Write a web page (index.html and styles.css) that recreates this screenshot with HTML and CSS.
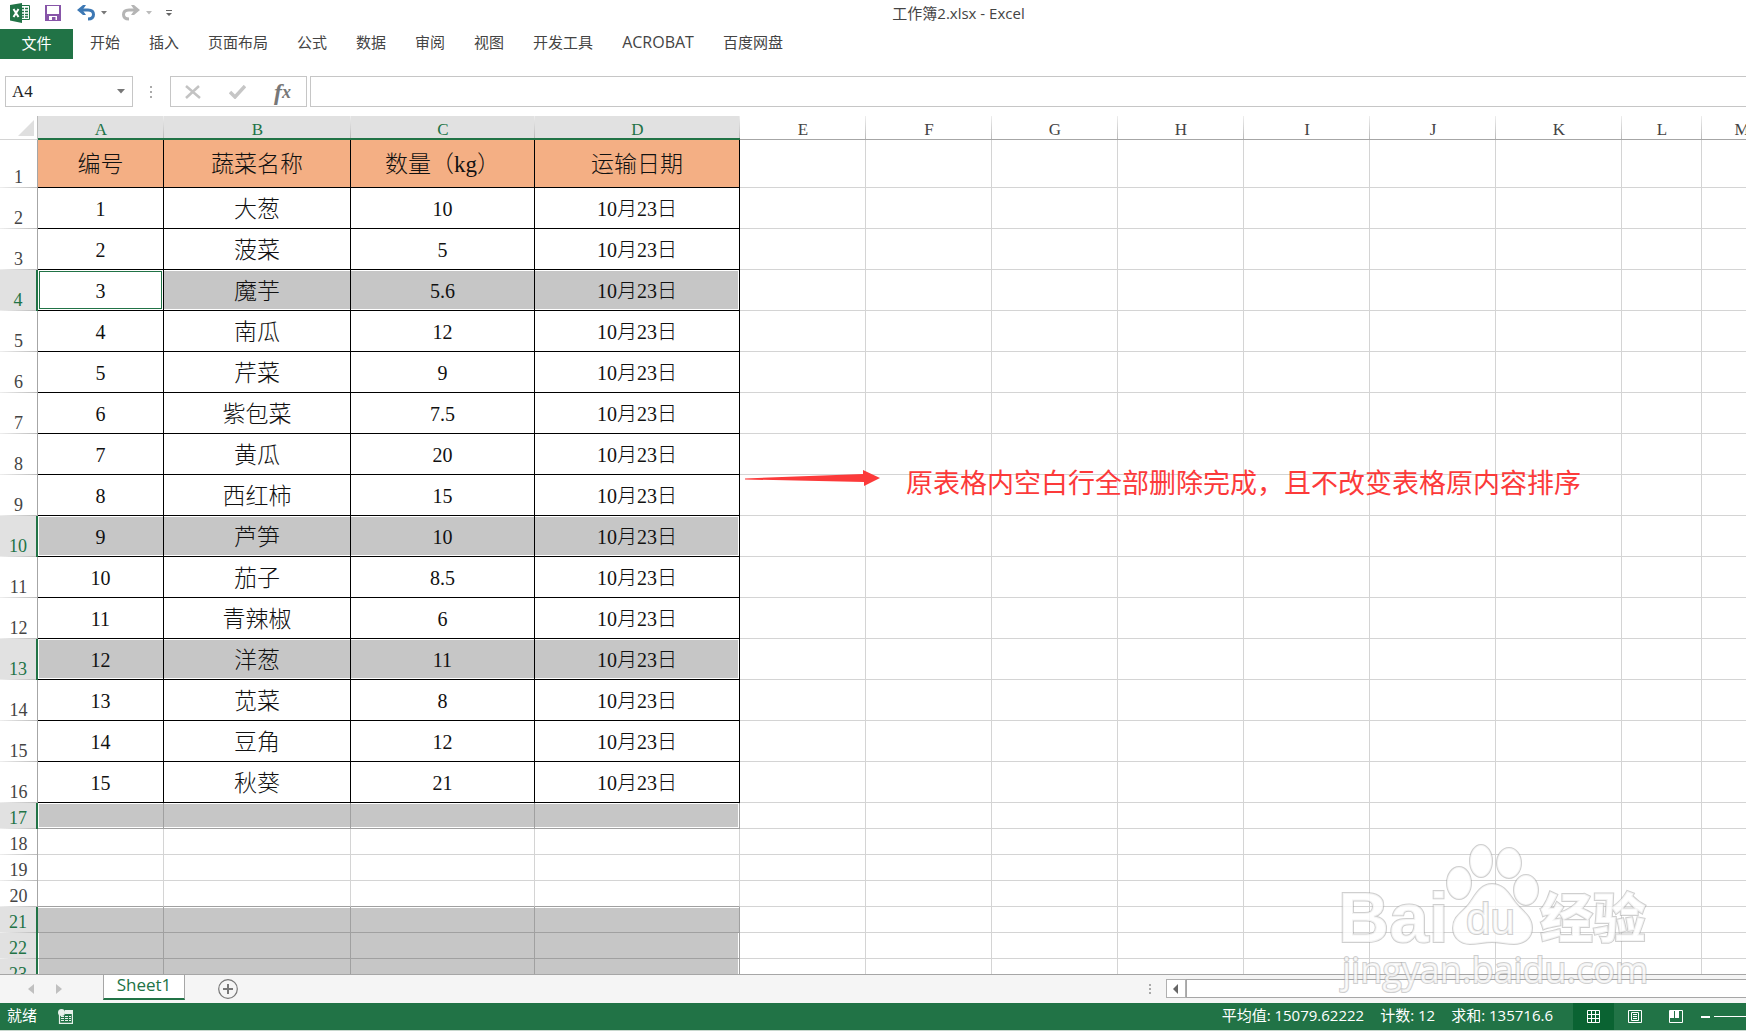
FILE: index.html
```html
<!DOCTYPE html>
<html lang="zh-CN">
<head>
<meta charset="utf-8">
<title>工作簿2.xlsx - Excel</title>
<link rel="stylesheet" href="styles.css">
</head>
<body>
<div class="app">
  <header class="titlebar">
    <div class="quick">
      <svg class="logo" width="20" height="20" viewBox="0 0 20 20"><path fill="#fff" stroke="#217346" d="M10 2.500h9.500v14H10z"/><path stroke="#217346" stroke-width="1.500" d="M11 5.500h3M15 5.500h3M11 8.500h3M15 8.500h3M11 11.500h3M15 11.500h3M11 14h3M15 14h3"/><path fill="#217346" d="M0 2 12 0v20L0 17.500z"/><path fill="none" stroke="#fff" stroke-width="2" d="m3.500 6 5 8M8.500 6l-5 8"/></svg>
      <button class="tool save" aria-label="保存"><svg width="16" height="16" viewBox="0 0 16 16"><path fill="#8755a8" d="M0 0h16v16H0z"/><path fill="#fff" d="M2 1h12v8H2zM4 11h8v4h-1.500v-3H7v3H4z"/></svg></button>
      <button class="tool undo" aria-label="撤消"><svg width="18" height="16" viewBox="0 0 18 16"><path fill="none" stroke="#3d78b4" stroke-width="3" d="M3 5h8q5.500 0 5.500 4.500T11 14"/><path fill="#3d78b4" d="M0 5 6 0h3L5.500 5 9 10H6z"/></svg></button>
      <button class="tool drop" aria-label="撤消列表"><svg width="6" height="4" viewBox="0 0 6 4"><path fill="#777" d="M0 0h6L3 3.500z"/></svg></button>
      <button class="tool redo" aria-label="恢复"><svg width="18" height="16" viewBox="0 0 18 16"><path fill="none" stroke="#b5b5b5" stroke-width="3" d="M15 5H7Q1.500 5 1.500 9.500T7 14"/><path fill="#b5b5b5" d="m18 5-6-5H9l3.500 5L9 10h3z"/></svg></button>
      <button class="tool drop" aria-label="恢复列表"><svg width="6" height="4" viewBox="0 0 6 4"><path fill="#bbb" d="M0 0h6L3 3.500z"/></svg></button>
      <button class="tool more" aria-label="自定义"><svg width="6" height="6" viewBox="0 0 6 6"><path fill="#666" d="M0 0h6v1H0zM0 3h6L3 6z"/></svg></button>
    </div>
    <h1 class="title">工作簿2.xlsx - Excel</h1>
  </header>
  <nav class="ribbon">
    <button class="tab file">文件</button>
    <button class="tab">开始</button><button class="tab">插入</button><button class="tab">页面布局</button><button class="tab">公式</button><button class="tab">数据</button><button class="tab">审阅</button><button class="tab">视图</button><button class="tab">开发工具</button><button class="tab latin">ACROBAT</button><button class="tab">百度网盘</button>
  </nav>
  <div class="formula">
    <div class="namebox"><input class="name" aria-label="名称框" value="A4"><button class="tool" aria-label="名称列表"><svg width="8" height="5" viewBox="0 0 8 5"><path fill="#777" d="M0 0h8L4 4.500z"/></svg></button></div>
    <svg class="grip" width="2" height="12" viewBox="0 0 2 12"><path fill="#aaa" d="M0 0h2v2H0zM0 5h2v2H0zM0 10h2v2H0z"/></svg>
    <div class="fx">
      <button class="tool" aria-label="取消"><svg width="16" height="14" viewBox="0 0 16 14"><path fill="none" stroke="#c3c3c3" stroke-width="2.500" d="m1 1 14 12M14 1 1 13"/></svg></button>
      <button class="tool" aria-label="输入"><svg width="17" height="14" viewBox="0 0 17 14"><path fill="none" stroke="#c6c6c6" stroke-width="3.500" d="m1 7 5 5L16 1"/></svg></button>
      <button class="tool insert" aria-label="插入函数"><i>f</i><i class="sub">x</i></button>
    </div>
    <input class="entry" aria-label="编辑栏">
  </div>
  <main class="sheet">
    <table class="grid">
      <colgroup><col class="w-head"><col class="w-a"><col class="w-b"><col class="w-c"><col class="w-d"><col class="w-e" span="7"><col class="w-l" span="2"></colgroup>
      <thead><tr><th class="corner"><svg width="16" height="16" viewBox="0 0 16 16"><path fill="#dfdfdf" d="M16 0v16H0z"/></svg></th><th class="on">A</th><th class="on">B</th><th class="on">C</th><th class="on">D</th><th>E</th><th>F</th><th>G</th><th>H</th><th>I</th><th>J</th><th>K</th><th>L</th><th>M</th></tr></thead>
      <tbody id="rows"></tbody>
    </table>
    <svg class="arrow" width="136" height="18" viewBox="0 0 136 18"><path fill="#fc3a3a" d="M0 8.500 118 4V0l17 8-16 8v-4L0 9.500z"/></svg>
    <p class="note">原表格内空白行全部删除完成，且不改变表格原内容排序</p>
  </main>
  <div class="sheetbar">
    <button class="tool prev" aria-label="上一个"><svg width="6" height="10" viewBox="0 0 6 10"><path fill="#c0c0c0" d="M6 0v10L0 5z"/></svg></button>
    <button class="tool next" aria-label="下一个"><svg width="6" height="10" viewBox="0 0 6 10"><path fill="#c0c0c0" d="M0 0v10l6-5z"/></svg></button>
    <button class="sheet-tab">Sheet1</button>
    <button class="tool add" aria-label="新工作表"><svg width="20" height="20" viewBox="0 0 20 20"><circle cx="10" cy="10" r="9.300" fill="none" stroke="#777" stroke-width="1.200"/><path stroke="#777" stroke-width="2" d="M5 10h10M10 5v10"/></svg></button>
    <div class="hscroll">
      <svg width="2" height="10" viewBox="0 0 2 10"><path fill="#aaa" d="M0 0h2v2H0zM0 4h2v2H0zM0 8h2v2H0z"/></svg>
      <button class="tool left" aria-label="向左滚动"><svg width="5" height="10" viewBox="0 0 5 10"><path fill="#666" d="M5 0v10L0 5z"/></svg></button>
      <div class="track"></div>
    </div>
  </div>
  <footer class="status">
    <span>就绪</span>
    <svg class="macro" width="15" height="15" viewBox="0 0 15 15"><path fill="none" stroke="#e6f0ea" stroke-width="1.200" d="M1.500 6v8.400h12.900V2"/><path fill="#e6f0ea" d="M7 1h8v4H7z"/><circle cx="3.500" cy="3.500" r="3.500" fill="#e6f0ea"/><path stroke="#e6f0ea" stroke-dasharray="3 1" d="M3 7.500h10M3 9.500h10M3 11.500h10"/></svg>
    <div class="sums"><span>平均值: 15079.62222</span><span>计数: 12</span><span>求和: 135716.6</span></div>
    <button class="view active" aria-label="普通"><svg width="13" height="13" viewBox="0 0 13 13"><path fill="none" stroke="#fff" d="M.5.5h12v12H.5zM4.500 0v13M8.500 0v13M0 4.500h13M0 8.500h13"/></svg></button>
    <button class="view" aria-label="页面布局"><svg width="14" height="13" viewBox="0 0 14 13"><path fill="none" stroke="#fff" d="M.5.5h13v12H.5zM3.500 2.500h7v8h-7zM5 4.500h4M5 6.500h4M5 8.500h4"/></svg></button>
    <button class="view" aria-label="分页预览"><svg width="14" height="13" viewBox="0 0 14 13"><path fill="none" stroke="#fff" d="M.5.5h13v12H.5z"/><path fill="#fff" d="M1 1h4v7H1zM6 1h4v7H6z"/></svg></button>
    <div class="zoom"><span class="minus"></span><span class="rail"></span></div>
  </footer>
  <svg class="watermark" width="330" height="160" viewBox="0 0 330 160">
    <g class="ink">
      <text class="wm-bai" x="8" y="102">Bai</text>
      <ellipse cx="129" cy="43" rx="12" ry="16"/><ellipse cx="151" cy="21" rx="11" ry="16"/><ellipse cx="179" cy="23" rx="12" ry="15"/><ellipse cx="196" cy="50" rx="12" ry="15"/>
      <path d="M162 44c12 0 17 10 23 18s17 14 17 26c0 10-8 16-18 16-8 0-14-2-22-2s-14 2-22 2c-10 0-17-7-17-16 0-12 10-16 16-24s11-20 23-20z"/>
      <text class="wm-du" x="136" y="94">du</text>
      <text class="wm-cn" x="210" y="98">经验</text>
      <text class="wm-url" x="12" y="143">jingyan.baidu.com</text>
    </g>
  </svg>
</div>
<script src="grid.js"></script>
</body>
</html>
```
FILE: styles.css
```css
* { box-sizing: border-box; }
body { margin: 0; background: #fff; color: #444; font: 15px/20px "Open Sans", "Noto Sans CJK SC", sans-serif; }
button, input { font: inherit; color: inherit; border: 0; background: none; padding: 0; margin: 0; outline: 0; }
svg { display: block; flex: none; }
.app { display: flex; flex-direction: column; height: 100vh; overflow: hidden; position: relative; }
.tool { display: flex; align-items: center; justify-content: center; }

.titlebar { display: grid; grid-template-columns: 1fr auto 1fr; height: 29px; padding-right: 10px; flex: none; align-items: start; }
.quick { display: flex; align-items: center; padding-left: 10px; height: 26px; }
.save { margin-left: 15px; }
.undo { margin-left: 16px; }
.drop { margin-left: 6px; }
.redo { margin-left: 15px; }
.more { margin-left: 14px; }
.title { grid-column: 2; margin: 0; padding-left: 181px; font-size: 15px; font-weight: 400; line-height: 26px; }

.ribbon { display: flex; height: 47px; flex: none; align-items: flex-start; gap: 29px; }
.tab { height: 26px; white-space: nowrap; }
.latin { font-size: 16px; }
.file { width: 73px; height: 30px; margin-right: -12px; padding-bottom: 2px; background: #217346; color: #fff; }

.formula { display: flex; height: 31px; flex: none; padding-left: 5px; align-items: stretch; }
.namebox { display: flex; width: 128px; border: 1px solid #c6c6c6; padding: 0 7px 0 6px; font: 17px/20px "Liberation Serif", serif; color: #222; }
.name { flex: 1; min-width: 0; }
.grip { align-self: center; margin: 0 18px 0 17px; }
.fx { display: flex; width: 137px; border: 1px solid #c6c6c6; align-items: center; justify-content: space-between; padding: 0 15px 0 14px; margin-right: 3px; }
.insert { font: italic 700 24px/24px "Liberation Serif", serif; color: #777; }
.sub { font-size: 18px; align-self: flex-end; }
.entry { flex: 1; border: 1px solid #c6c6c6; border-right: 0; }

.sheet { flex: 1; min-height: 0; overflow: hidden; position: relative; padding-top: 9px; border-bottom: 1px solid #a6a6a6; }
.grid { table-layout: fixed; width: 0; border-collapse: separate; border-spacing: 0; font-family: "Liberation Serif", "Noto Sans CJK SC", serif; }
.w-head { width: 38px; } .w-a { width: 126px; } .w-b { width: 187px; } .w-c { width: 184px; } .w-d { width: 205px; } .w-e { width: 126px; } .w-l { width: 80px; }
.grid th { font-weight: 400; padding: 0; }
thead th { height: 24px; font-size: 17px; line-height: 19px; vertical-align: bottom; border-bottom: 1px solid #a6a6a6; background: linear-gradient(#eee, #bbb) right / 1px 100% no-repeat; }
thead th.on { border-bottom: 2px solid #217346; color: #217346; background-color: #e1e1e1; line-height: 17px; }
thead th.corner { border-bottom-color: #d4d4d4; background: none; border-right: 1px solid #bbb; padding: 0 3px 3px 18px; }
tbody th { height: 26px; vertical-align: bottom; font-size: 18px; line-height: 22px; border-right: 1px solid #a6a6a6; background: linear-gradient(90deg, #eee, #bbb) bottom / 100% 1px no-repeat; }
tbody th.on { color: #217346; background-color: #e1e1e1; border-right: 2px solid #217346; }
td { border-right: 1px solid #d4d4d4; border-bottom: 1px solid #d4d4d4; padding: 0; text-align: center; vertical-align: middle; color: #111; font-size: 20px; line-height: 24px; white-space: nowrap; }
.data > * { height: 41px; }
.head > * { height: 48px; }
.data .box, .head .box { border-color: #000; padding-top: 2px; }
.head .box { background: #f4af84; font-size: 23px; }
.data .veg { font-size: 23px; font-weight: 300; padding-top: 4px; }
.head .box, .data .date { font-weight: 300; }
.sel { background: #c6c6c6; border-color: #a0a0a0; box-shadow: inset 0 1px #fff, inset 0 -1px #fff; }
.sel.first { box-shadow: inset 1px 1px #fff, inset 0 -1px #fff; }
.sel.last { box-shadow: inset 0 1px #fff, inset -1px -1px #fff; }
.run .sel { box-shadow: none; }
.run .sel.first { box-shadow: inset 1px 0 #fff; }
.run .sel.last { box-shadow: inset -1px 0 #fff; }
.edge .box { border-bottom-color: #a0a0a0; box-shadow: none; }
.top .sel, .top .sel.first, .top .sel.last { box-shadow: inset 0 1px #fff; }
.sel.current { background: #fff; box-shadow: inset 0 0 0 1px #fff, inset 0 0 0 2px #217346; }

.arrow { position: absolute; left: 745px; top: 363px; }
.note { position: absolute; left: 906px; top: 355px; margin: 0; color: #fc3a3a; font: 27px/40px "Noto Sans CJK SC", sans-serif; white-space: nowrap; }

.sheetbar { display: flex; height: 28px; flex: none; background: #f5f5f5; align-items: flex-start; }
.prev, .next { height: 28px; }
.prev { margin-left: 28px; }
.next { margin: 0 41px 0 22px; }
.sheet-tab { width: 82px; height: 25px; padding-bottom: 4px; border: 1px solid #a6a6a6; border-top: 0; border-bottom: 2px solid #217346; background: #fff; color: #217346; font-size: 17px; line-height: 18px; }
.add { margin: 4px 0 0 33px; }
.hscroll { display: flex; flex: none; width: 34.2%; margin-left: auto; align-items: center; padding-top: 4px; }
.left { width: 20px; height: 19px; margin-left: 15px; border: 1px solid #b0b0b0; background: #fff; }
.track { flex: 1; height: 19px; border: 1px solid #a6a6a6; border-right: 0; background: #fff; }

.status { display: flex; height: 28px; flex: none; padding-left: 7px; background: #217346; border-bottom: 1px solid #c8d8ce; color: #fff; font-size: 15px; line-height: 25px; align-items: stretch; white-space: nowrap; }
.macro { margin: 6px 0 0 21px; }
.sums { display: flex; gap: 16px; margin: 0 20px 0 auto; }
.view { width: 41px; display: flex; align-items: center; justify-content: center; }
.active { background: #0a6332; }
.zoom { display: flex; align-items: center; width: 50px; gap: 4px; padding-left: 5px; }
.minus { width: 9px; height: 2px; background: #fff; }
.rail { flex: 1; height: 1px; background: #fff; }

.watermark { position: absolute; right: 86px; bottom: 31px; pointer-events: none; }
.ink { fill: rgba(255, 255, 255, .75); stroke: rgba(160, 160, 160, .5); stroke-width: 2; paint-order: stroke; }
.wm-bai { font: 700 71px "Liberation Sans", sans-serif; }
.wm-du { font: 400 44px "Liberation Sans", sans-serif; }
.wm-cn { font: 900 53px "Noto Sans CJK SC", sans-serif; }
.wm-url { font: 36px "Open Sans", sans-serif; }
```
FILE: grid.js
```js
const names = ["大葱", "菠菜", "魔芋", "南瓜", "芹菜", "紫包菜", "黄瓜", "西红柿", "芦笋", "茄子", "青辣椒", "洋葱", "苋菜", "豆角", "秋葵"];
const amounts = ["10", "5", "5.6", "12", "9", "7.5", "20", "15", "10", "8.5", "6", "11", "8", "12", "21"];
const heads = ["编号", "蔬菜名称", "数量（kg）", "运输日期"];
const selected = [4, 10, 13, 17, 21, 22, 23];
const kinds = ["num", "veg", "num", "date"];
const body = document.getElementById("rows");

for (let r = 1; r <= 23; r++) {
  const row = body.insertRow();
  const on = selected.includes(r);
  row.className = r === 1 ? "head" : r <= 16 ? "data" : r === 20 ? "edge" : r === 21 ? "top" : r > 21 ? "run" : "";
  const th = document.createElement("th");
  th.textContent = r;
  if (on) th.className = "on";
  row.append(th);
  const texts = r === 1 ? heads : r <= 16 ? [r - 1, names[r - 2], amounts[r - 2], "10月23日"] : [];
  for (let c = 0; c < 13; c++) {
    const td = row.insertCell();
    if (c > 3) continue;
    td.textContent = texts[c] ?? "";
    td.className = "box " + kinds[c];
    if (on) td.classList.add("sel");
    if (c === 0) td.classList.add("first");
    if (c === 3) td.classList.add("last");
    if (r === 4 && c === 0) td.classList.add("current");
  }
}
```
